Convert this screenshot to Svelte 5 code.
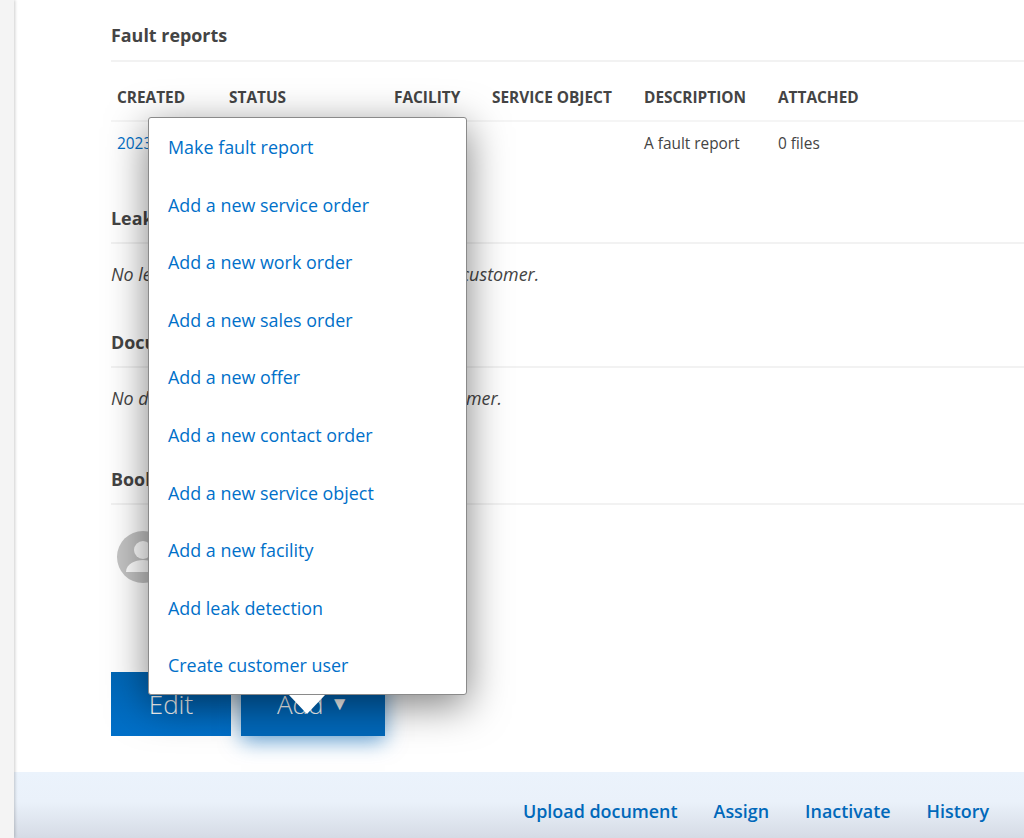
<script>
    const menuItems = [
        "Make fault report",
        "Add a new service order",
        "Add a new work order",
        "Add a new sales order",
        "Add a new offer",
        "Add a new contact order",
        "Add a new service object",
        "Add a new facility",
        "Add leak detection",
        "Create customer user"
    ];
    const columns = ["Created", "Status", "Facility", "Service object", "Description", "Attached"];
    const footerLinks = ["Upload document", "Assign", "Inactivate", "History"];
</script>

<div class="page">
    <aside class="rail"></aside>
    <div class="main">
        <main class="content">
            <section class="fault">
                <h2>Fault reports</h2>
                <table>
                    <thead>
                        <tr>
                            {#each columns as c}
                                <th>{c}</th>
                            {/each}
                        </tr>
                    </thead>
                    <tbody>
                        <tr>
                            <td><a href="#top">2023-03-14</a></td>
                            <td>New</td>
                            <td></td>
                            <td></td>
                            <td>A fault report</td>
                            <td>0 files</td>
                        </tr>
                    </tbody>
                </table>
            </section>

            <section class="leak">
                <h2>Leak detections</h2>
                <p class="empty">No leak detections have been added for this customer.</p>
            </section>

            <section class="docs">
                <h2>Documents</h2>
                <p class="empty">No documents have been added to this customer.</p>
            </section>

            <section class="book">
                <h2>Bookmarks</h2>
                <div class="avatar">
                    <svg viewBox="0 0 52 52" width="52" height="52" aria-hidden="true">
                        <circle cx="26" cy="26" r="26" fill="#c4c4c4" />
                        <circle cx="26" cy="19" r="9" fill="#fff" />
                        <path d="M9 41c0-8 9-12 17-12s17 4 17 12z" fill="#fff" />
                    </svg>
                </div>
            </section>

            <div class="actions">
                <button type="button" class="btn">Edit</button>
                <button type="button" class="btn add">Add <span class="caret">▼</span></button>
            </div>
        </main>

        <footer>
            {#each footerLinks as l}
                <a href="#top">{l}</a>
            {/each}
        </footer>
    </div>

    <div class="menu">
        {#each menuItems as item}
            <a href="#top">{item}</a>
        {/each}
        <span class="arrow"></span>
    </div>
</div>

<style>
    :global(body) {
        margin: 0;
        background: #fff;
    }

    .page {
        position: relative;
        display: flex;
        width: 1024px;
        height: 838px;
        overflow: hidden;
        font-family: "Open Sans", sans-serif;
        font-size: 15.4px;
        color: #444;
    }

    .rail {
        width: 14px;
        flex: none;
        background: #f4f4f4;
        box-shadow: 1px 0 3px rgba(0, 0, 0, 0.2);
        z-index: 1;
    }

    .main {
        flex: 1;
        display: flex;
        flex-direction: column;
        min-width: 0;
    }

    .content {
        flex: 1;
        padding-left: 97px;
    }

    h2 {
        margin: 0;
        font-size: 17.9px;
        line-height: 24px;
        font-weight: 700;
        padding-bottom: 12px;
        border-bottom: 2px solid #f2f2f2;
    }

    .fault {
        padding-top: 23px;
    }

    .fault h2 {
        padding-bottom: 13px;
    }

    table {
        width: 100%;
        border-collapse: collapse;
        table-layout: fixed;
    }

    th {
        height: 46px;
        padding: 12px 6px 0;
        text-align: left;
        font-size: 15.4px;
        font-weight: 700;
        text-transform: uppercase;
        white-space: nowrap;
        border-bottom: 2px solid #f5f5f5;
    }

    th:nth-child(1) { width: 100px; }
    th:nth-child(2) { width: 153px; }
    th:nth-child(3) { width: 86px; }
    th:nth-child(4) { width: 140px; }
    th:nth-child(5) { width: 122px; }

    td {
        height: 42px;
        padding: 0 6px;
        white-space: nowrap;
        overflow: hidden;
    }

    td a {
        color: #0070c9;
        text-decoration: none;
    }

    .leak {
        padding-top: 42px;
    }

    .docs {
        padding-top: 44px;
    }

    .book {
        padding-top: 57px;
    }

    .empty {
        margin: 0;
        padding-top: 18px;
        font-size: 17.9px;
        line-height: 24px;
        font-style: italic;
    }

    .avatar {
        margin: 26px 0 0 6px;
        height: 52px;
    }

    .avatar svg {
        display: block;
    }

    .actions {
        display: flex;
        gap: 10px;
        margin-top: 89px;
    }

    .btn {
        height: 64px;
        width: 120px;
        border: 0;
        border-radius: 0;
        padding: 0;
        background: linear-gradient(#0066b5, #0070c9);
        color: #fff;
        font: inherit;
        font-size: 26px;
        font-weight: 300;
    }

    .add {
        width: 144px;
        background: #0068ba;
        box-shadow: 0 5px 20px rgba(0, 104, 186, 0.6);
    }

    .caret {
        font-size: 19px;
        vertical-align: 4px;
    }

    footer {
        flex: none;
        box-sizing: border-box;
        height: 66px;
        display: flex;
        justify-content: flex-end;
        align-items: center;
        gap: 36px;
        padding: 12px 35px 0 0;
        background: linear-gradient(#ebf3fc 0%, #eaf1fa 45%, #d5dbe5 100%);
    }

    footer a {
        color: #0068ba;
        font-size: 17.9px;
        font-weight: 600;
        text-decoration: none;
    }

    .menu {
        position: absolute;
        left: 148px;
        top: 117px;
        box-sizing: border-box;
        width: 319px;
        height: 578px;
        display: flex;
        flex-direction: column;
        padding-top: 1px;
        background: #fff;
        border: 1px solid #8a8a8a;
        border-radius: 3px;
        box-shadow: 0 10px 40px rgba(0, 0, 0, 0.5);
    }

    .menu a {
        height: 57.6px;
        line-height: 57.6px;
        padding-left: 19px;
        flex: none;
        color: #0070c9;
        font-size: 17.9px;
        text-decoration: none;
    }

    .arrow {
        position: absolute;
        left: 140px;
        bottom: -20px;
        width: 0;
        height: 0;
        border-left: 18px solid transparent;
        border-right: 18px solid transparent;
        border-top: 19px solid #fff;
    }
</style>
